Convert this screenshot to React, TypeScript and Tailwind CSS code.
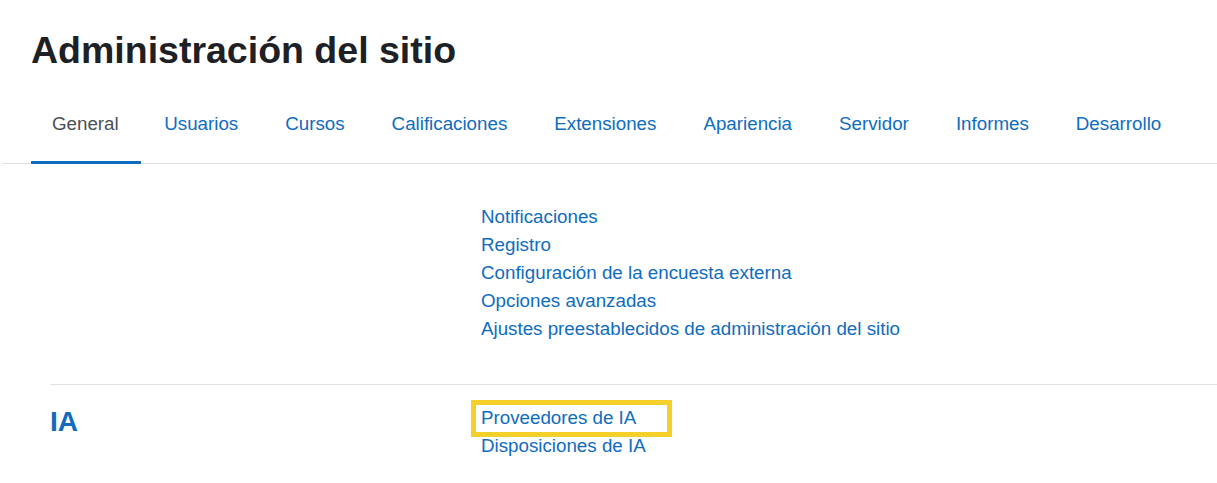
import React from "react";

const tabs = [
	"General",
	"Usuarios",
	"Cursos",
	"Calificaciones",
	"Extensiones",
	"Apariencia",
	"Servidor",
	"Informes",
	"Desarrollo",
];

const general = [
	"Notificaciones",
	"Registro",
	"Configuración de la encuesta externa",
	"Opciones avanzadas",
	"Ajustes preestablecidos de administración del sitio",
];

export default function App() {
	return (
		<div className="min-h-[483px] bg-white font-['Liberation_Sans',Arial,sans-serif] text-[#1d2125]">
			{/* Título */}
			<h1 className="pl-[31px] pt-[27px] text-[37.5px] font-bold leading-[46px]">
				Administración del sitio
			</h1>

			{/* Pestañas */}
			<nav className="mt-[20px] ml-[2px] flex border-b border-[#dee2e6]">
				<div className="ml-[29px] flex">
					{tabs.map((t, i) => (
						<a
							key={t}
							href="#"
							className={
								i === 0
									? "-mb-px border-b-[3px] border-[#0f6cbf] pl-[21px] pr-[22px] pt-[19px] pb-[25px] text-[18.75px] leading-[24px] text-[#495057]"
									: "-mb-px border-b-[3px] border-transparent px-[23.5px] pt-[19px] pb-[25px] text-[18.75px] leading-[24px] text-[#0f6cbf]"
							}
						>
							{t}
						</a>
					))}
				</div>
			</nav>

			{/* General */}
			<section className="ml-[50px] flex pt-[39px] pb-[41px]">
				<div className="w-[431px]" />
				<ul className="flex flex-col">
					{general.map((l) => (
						<li key={l} className="text-[18.75px] leading-[28px]">
							<a href="#" className="text-[#0f6cbf]">
								{l}
							</a>
						</li>
					))}
				</ul>
			</section>

			{/* IA */}
			<section className="ml-[50px] flex border-t border-[#dee2e6] pt-[19px]">
				<h2 className="w-[431px] pt-[1px] text-[28px] font-bold leading-[34px] text-[#0f6cbf]">
					IA
				</h2>
				<ul className="flex flex-col">
					<li className="relative text-[18.75px] leading-[28px]">
						<a href="#" className="text-[#0f6cbf]">
							Proveedores de IA
						</a>
						{/* resaltado */}
						<span className="pointer-events-none absolute left-[-10px] top-[-4px] h-[37px] w-[201px] border-[5px] border-[#f5d02b]" />
					</li>
					<li className="text-[18.75px] leading-[28px]">
						<a href="#" className="text-[#0f6cbf]">
							Disposiciones de IA
						</a>
					</li>
				</ul>
			</section>
		</div>
	);
}
